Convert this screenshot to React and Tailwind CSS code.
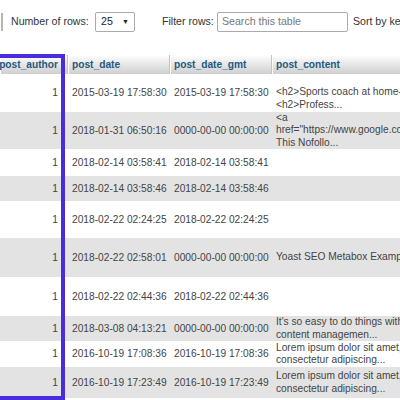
import React from "react";

const rows = [
  { h: 38, bg: "bg-white", d: "2015-03-19 17:58:30", g: "2015-03-19 17:58:30", c: ["<h2>Sports coach at home-", "<h2>Profess..."], top: true },
  { h: 37, bg: "bg-[#e3e3e3]", d: "2018-01-31 06:50:16", g: "0000-00-00 00:00:00", c: ["<a", 'href="https://www.google.com', "This Nofollo..."] },
  { h: 27, bg: "bg-white", d: "2018-02-14 03:58:41", g: "2018-02-14 03:58:41", c: [] },
  { h: 25, bg: "bg-[#e3e3e3]", d: "2018-02-14 03:58:46", g: "2018-02-14 03:58:46", c: [] },
  { h: 37, bg: "bg-white", d: "2018-02-22 02:24:25", g: "2018-02-22 02:24:25", c: [] },
  { h: 39, bg: "bg-[#e3e3e3]", d: "2018-02-22 02:58:01", g: "0000-00-00 00:00:00", c: ["Yoast SEO Metabox Example"] },
  { h: 39, bg: "bg-white", d: "2018-02-22 02:44:36", g: "2018-02-22 02:44:36", c: [] },
  { h: 25, bg: "bg-[#e3e3e3]", d: "2018-03-08 04:13:21", g: "0000-00-00 00:00:00", c: ["It's so easy to do things with", "content managemen..."] },
  { h: 26, bg: "bg-white", d: "2016-10-19 17:08:36", g: "2016-10-19 17:08:36", c: ["Lorem ipsum dolor sit amet,", "consectetur adipiscing..."] },
  { h: 31, bg: "bg-[#e3e3e3]", d: "2016-10-19 17:23:49", g: "2016-10-19 17:23:49", c: ["Lorem ipsum dolor sit amet,", "consectetur adipiscing..."] },
];

function HeaderCell({ w, children, right }) {
  return (
    <div
      className={`${w} h-full flex items-center shrink-0 border-r border-r-[#c4c4c4] border-l border-l-white font-bold text-[#235a81] ${right ? "justify-end pr-[9px]" : "pl-[3px]"}`}
    >
      {children}
    </div>
  );
}

export default function App() {
  return (
    <div
      className="relative w-[400px] h-[400px] overflow-hidden bg-white text-[10.2px] text-[#444]"
      style={{ fontFamily: '"Liberation Sans", Arial, sans-serif' }}
    >
      {/* toolbar */}
      <div className="flex items-center h-[20px] mt-[12px] whitespace-nowrap text-[10.6px]">
        <div className="w-[2px] h-[18px] ml-[1px] bg-[#b5b5b5] shrink-0" />
        <span className="ml-[8px] w-[76px] shrink-0 text-[#333]">Number of rows:</span>
        <div className="ml-[8px] w-[40px] h-[20px] shrink-0 border border-[#aaa] rounded-[2px] flex items-center justify-between pl-[5px] pr-[5px] text-[#222]">
          <span>25</span>
          <span className="text-[7px]">▼</span>
        </div>
        <span className="ml-[27px] w-[55px] shrink-0 text-[#333]">Filter rows:</span>
        <div className="w-[131px] h-[20px] shrink-0 border border-[#aaa] rounded-[2px] flex items-center pl-[4px] text-[#777]">
          Search this table
        </div>
        <span className="ml-[5px] shrink-0 text-[#333]">Sort by key:</span>
      </div>

      {/* table */}
      <div className="mt-[23px] w-[560px] whitespace-nowrap">
        <div className="flex h-[19px] bg-gradient-to-b from-white to-[#cfcfcf]">
          <HeaderCell w="w-[68px]" right>post_author</HeaderCell>
          <HeaderCell w="w-[102px]">post_date</HeaderCell>
          <HeaderCell w="w-[102px]">post_date_gmt</HeaderCell>
          <HeaderCell w="w-[200px]">post_content</HeaderCell>
        </div>
        {rows.map((r, i) => (
          <div key={i} className={`flex ${r.bg}`} style={{ height: r.h }}>
            <div className="w-[68px] shrink-0 flex items-center justify-end pr-[10px]">1</div>
            <div className="w-[102px] shrink-0 flex items-center pl-[4px]">{r.d}</div>
            <div className="w-[102px] shrink-0 flex items-center pl-[4px]">{r.g}</div>
            <div
              className={`w-[200px] shrink-0 flex flex-col pl-[4px] leading-[12.5px] ${r.top ? "justify-start pt-[12px]" : "justify-center"}`}
            >
              {r.c.map((l, j) => (
                <div key={j}>{l}</div>
              ))}
            </div>
          </div>
        ))}
      </div>

      {/* highlight rectangle */}
      <div className="absolute left-[-6px] top-[54px] w-[71px] h-[346px] border-[4px] border-[#4a2cdc]" />
    </div>
  );
}
